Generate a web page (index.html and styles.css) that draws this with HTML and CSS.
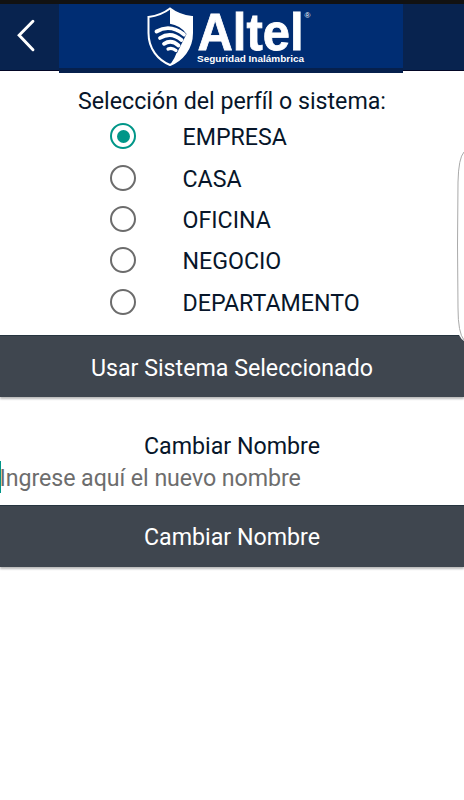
FILE: index.html
```html
<!DOCTYPE html>
<html lang="es">
<head>
<meta charset="utf-8">
<title>Altel</title>
<link rel="stylesheet" href="styles.css">
</head>
<body>
<main class="screen">
  <header class="header">
    <svg class="back" viewBox="0 0 59 67" role="img" aria-label="Volver"><path d="M33 17.500 L19 31.700 L33 46.500"/></svg>
    <div class="brand">
      <svg class="logo" viewBox="135 4 190 64" role="img" aria-label="Altel Seguridad Inalámbrica">
        <path class="shield-fill" d="M170 9 C177 14 184 16 192 17 V33 C192 49 182 59 170 65 Q175 58 177 52 L170 50Z"/>
        <path class="shield-gap" d="M169 23.500 Q181 25.500 186.500 34 L177 53 L169 50Z"/>
        <path class="shield" d="M170 8.500 C163 14 156 16 148.500 17 V33 C148.500 49 158 60 170 65 C182 60 192 49 192 33 V17 C184 16 177 14 170 8.500Z"/>
        <path class="wave" d="M156.500 31.500 Q170 23.500 184 34.500"/>
        <path class="wave" d="M160 38 Q171 31 181.500 40"/>
        <path class="wave" d="M164 43.800 Q171.500 39 178.500 45.500"/>
        <path class="wave small" d="M168 49 Q172 47 176 50.500"/>
        <text class="name" x="197.500" y="50" textLength="106" lengthAdjust="spacingAndGlyphs">Altel</text>
        <text class="reg" x="304.500" y="18">®</text>
        <text class="tagline" x="197" y="62" textLength="107" lengthAdjust="spacingAndGlyphs">Seguridad Inalámbrica</text>
      </svg>
    </div>
    <div class="header-end"></div>
  </header>
  <h1 class="title"><span>Selección del perfíl o sistema:</span></h1>
  <div class="options">
    <div class="option"><i class="radio checked"></i><span>EMPRESA</span></div>
    <div class="option"><i class="radio"></i><span>CASA</span></div>
    <div class="option"><i class="radio"></i><span>OFICINA</span></div>
    <div class="option"><i class="radio"></i><span>NEGOCIO</span></div>
    <div class="option"><i class="radio"></i><span>DEPARTAMENTO</span></div>
  </div>
  <button class="button">Usar Sistema Seleccionado</button>
  <h2 class="subtitle">Cambiar Nombre</h2>
  <div class="field"><span>Ingrese aquí el nuevo nombre</span></div>
  <button class="button">Cambiar Nombre</button>
  <svg class="edge" viewBox="0 0 8 202"><path class="edge-fill" d="M3 195 H8 V201 Q5 199 3 195Z"/><path class="edge-line" d="M8 12 Q2.500 18 2 42 Q1 105 2 168 Q2 193 8 200"/></svg>
</main>
</body>
</html>
```
FILE: styles.css
```css
* { box-sizing: border-box; }
body {
  margin: 0;
  background: #fff;
  color: #07162a;
  font: 400 23.2px/28px Roboto, sans-serif;
}
.screen {
  position: relative;
  display: flex;
  flex-direction: column;
  height: 800px;
  overflow: hidden;
}
.header {
  display: flex;
  align-items: flex-start;
  height: 74px;
  border-top: 4px solid #121212;
}
.back {
  width: 59px;
  height: 67px;
  background: #08234f;
  border-bottom: 1px solid #020625;
}
.back path { fill: none; stroke: #fff; stroke-width: 3; stroke-linecap: round; }
.brand {
  width: 344px;
  height: 69px;
  padding-left: 76px;
  background: #002d73;
  border-bottom: 5px solid #06204d;
}
.logo { display: block; width: 190px; height: 64px; }
.shield, .wave { fill: none; stroke: #fff; stroke-width: 2; }
.shield-fill { fill: #fff; }
.shield-gap { fill: #002d73; }
.wave { stroke-width: 3.8; stroke-linecap: round; }
.wave.small { stroke-width: 3.2; }
.logo text { fill: #fff; font-family: "Liberation Sans", sans-serif; font-weight: 700; }
.logo .name { font-size: 52px; stroke: #fff; stroke-width: .8; }
.logo .reg { font-size: 8px; font-weight: 400; }
.logo .tagline { font-size: 9.8px; }
.header-end {
  flex: 1;
  height: 67px;
  background: #08234f;
  border-bottom: 1px solid #020625;
}
.title, .subtitle { margin: 0; font-size: inherit; font-weight: 400; text-align: center; }
.title { margin-top: 13px; height: 28px; }
.options { height: 220px; }
.option { display: flex; align-items: center; height: 41.4px; padding: 1px 0 0 110px; }
.option span { margin-left: 46.500px; padding-top: 2px; }
.radio {
  display: grid;
  place-items: center;
  width: 26px;
  height: 26px;
  border: 2.5px solid #6c6c6c;
  border-radius: 50%;
}
.checked { border-color: #009688; }
.checked::after { content: ""; width: 13px; height: 13px; border-radius: 50%; background: #009688; }
.button {
  flex: none;
  width: 100%;
  height: 62px;
  padding: 2px 0 0;
  border: 0;
  border-top: 1px solid #26343f;
  background: #3f464f;
  color: #fff;
  font: inherit;
  box-shadow: 0 2px 2px #bbb;
}
.subtitle { margin-top: 35px; height: 29px; }
.field { height: 44px; color: #6d6d6d; }
.field span { display: block; height: 32px; padding-top: 3px; margin-left: -1px; border-left: 2px solid #009688; text-indent: -1.5px; letter-spacing: -.06px; }
.field + .button { padding-top: 0; }
.edge { position: absolute; right: 0; top: 140px; width: 8px; height: 202px; }
.edge-line { fill: none; stroke: #aaa; stroke-width: 1; }
.edge-fill { fill: #fff; }
```
